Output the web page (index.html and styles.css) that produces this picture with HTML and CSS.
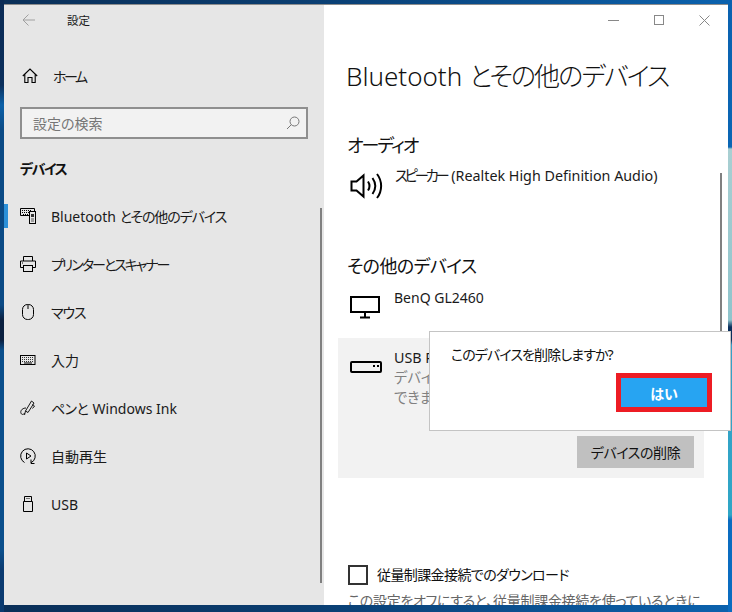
FILE: index.html
```html
<!DOCTYPE html>
<html lang="ja">
<head>
<meta charset="utf-8">
<title>設定</title>
<link rel="stylesheet" href="styles.css">
</head>
<body>
<div class="window">
  <aside class="sidebar">
    <div class="titlebar">
      <svg class="back" width="13" height="12" viewBox="0 0 13 12"><path d="M6.500.5 1 6l5.500 5.500M1 6h12" fill="none" stroke="#a0a0a0"/></svg>
      <span class="apptitle">設定</span>
    </div>
    <div class="home">
      <svg width="16" height="16" viewBox="0 0 16 16"><path d="M.8 8 8 1l7.200 7M2.800 6.500V14.500H6V9.500h4V14.500h3.200V6.500" fill="none" stroke="#000" stroke-width="1.100"/></svg>
      <span class="ls-home">ホーム</span>
    </div>
    <div class="search">
      <span>設定の検索</span>
      <svg width="14" height="14" viewBox="0 0 14 14"><circle cx="8.500" cy="5.500" r="4.500" fill="none" stroke="#777"/><path d="M5.300 8.700 1 13" stroke="#777" fill="none"/></svg>
    </div>
    <h2 class="navhead">デバイス</h2>
    <nav class="nav">
      <div class="navitem active">
        <svg width="16" height="16" viewBox="0 0 16 16"><path d="M.5.500h14V3M.5.500V7.500H9" fill="none" stroke="#000"/><path d="M2 2.500h10M2 4.500h10M3 6.500h6" stroke="#000" stroke-dasharray="1 1"/><rect x="9.500" y="3.500" width="6" height="12" fill="#e6e6e6" stroke="#000"/><rect x="11" y="6" width="3" height="3" fill="#333"/><path d="M11 11h3M11 13h3" stroke="#555"/></svg>
        <span>Bluetooth <span class="ls-1">とその他のデバイス</span></span>
      </div>
      <div class="navitem">
        <svg width="16" height="16" viewBox="0 0 16 16"><path d="M3.500 5V.5h9V5M3.500 11.500H.5V5h15v6.500h-3" fill="none" stroke="#000"/><rect x="3.500" y="9.500" width="9" height="6" fill="none" stroke="#000"/><path d="M2 7h1" stroke="#000"/></svg>
        <span class="ls-2">プリンターとスキャナー</span>
      </div>
      <div class="navitem">
        <svg width="16" height="16" viewBox="0 0 16 16"><rect x="2.500" y=".5" width="11" height="15" rx="5" fill="none" stroke="#000"/><path d="M8 .5V5" stroke="#000"/></svg>
        <span class="ls-1">マウス</span>
      </div>
      <div class="navitem">
        <svg width="16" height="16" viewBox="0 0 16 16"><rect x=".5" y="3.500" width="14.500" height="9" fill="none" stroke="#000"/><path d="M2 5.500h12M2 7.500h12M2 9.500h12" stroke="#333" stroke-dasharray="1 1"/><path d="M4 11h8" stroke="#000"/></svg>
        <span>入力</span>
      </div>
      <div class="navitem">
        <svg width="16" height="16" viewBox="0 0 16 16"><path d="M11.500 1 14 3 8 12.500 5.500 11ZM12.500 4.500l2 1.500-2 2.500M4.500 15 5.500 11" fill="none" stroke="#000" stroke-width=".9"/><path d="M6 8C3 8 .5 10 .8 12.500S4 15 4.500 13" fill="none" stroke="#000" stroke-width=".9"/></svg>
        <span><span class="ls-pen">ペンと</span> Windows Ink</span>
      </div>
      <div class="navitem">
        <svg width="16" height="16" viewBox="0 0 16 16"><path d="M4.500 14.500A7.300 7.300 0 1 1 11 14.700" fill="none" stroke="#000"/><path d="M6.500 5 11 8l-4.500 3Z" fill="none" stroke="#000"/><path d="M11 11.500v4h3.500" fill="none" stroke="#000"/></svg>
        <span>自動再生</span>
      </div>
      <div class="navitem">
        <svg width="16" height="16" viewBox="0 0 16 16"><path d="M4.500 5.500V.5h7v5M3.500 5.500h9v10h-9Z" fill="none" stroke="#000"/><path d="M6.500 2.500h1M8.500 2.500h1" stroke="#000"/></svg>
        <span>USB</span>
      </div>
    </nav>
    <div class="scroll scroll-side"></div>
  </aside>
  <main class="main">
    <div class="controls">
      <svg width="11" height="1" viewBox="0 0 11 1"><path d="M0 .5h11" stroke="#888"/></svg>
      <svg width="10" height="10" viewBox="0 0 10 10"><rect x=".5" y=".5" width="9" height="9" fill="none" stroke="#888"/></svg>
      <svg width="11" height="11" viewBox="0 0 11 11"><path d="M.5.500l10 10M10.500.5l-10 10" stroke="#888"/></svg>
    </div>
    <h1 class="pagetitle">Bluetooth <span class="ls-title">とその他のデバイス</span></h1>
    <h3 class="section first">オーディオ</h3>
    <div class="device spk">
      <svg width="34" height="28" viewBox="0 0 34 28"><path d="M1.500 9.500h5l7-6v21l-7-6h-5Z" fill="none" stroke="#000" stroke-width="2"/><path d="M18 9.500c2 3 2 6 0 9M22.500 6c3.500 5 3.500 11 0 16M27 2c5.500 7 5.500 17 0 24" fill="none" stroke="#000" stroke-width="2"/></svg>
      <span class="spk-text"><span class="ls-spk">スピーカー</span> <span>(Realtek High Definition Audio)</span></span>
    </div>
    <h3 class="section second">その他のデバイス</h3>
    <div class="device mon">
      <svg width="30" height="23" viewBox="0 0 30 23"><rect x="1" y="1" width="28" height="15" fill="none" stroke="#000" stroke-width="2"/><path d="M15 17v4M10 21.500h10" stroke="#000" stroke-width="2"/></svg>
      <span>BenQ GL2460</span>
    </div>
    <section class="panel">
      <div class="panelrow">
        <svg width="32" height="12" viewBox="0 0 32 12"><rect x="1" y="1" width="30" height="10" rx="1" fill="none" stroke="#000" stroke-width="2"/><path d="M23 5h2M27 5h2" stroke="#000" stroke-width="2"/></svg>
        <div class="paneltext">
          <div>USB Receiver</div>
          <div class="muted">デバイスを削除すると<br>できます</div>
        </div>
      </div>
      <button class="remove">デバイスの削除</button>
    </section>
    <label class="check"><span class="box"></span>従量制課金接続でのダウンロード</label>
    <p class="note">この設定をオフにすると、従量制課金接続を使っているときに</p>
    <div class="scroll scroll-main"></div>
  </main>
</div>
<div class="dialog">
  <p>このデバイスを削除しますか?</p>
  <button class="yes">はい</button>
</div>
</body>
</html>
```

FILE: styles.css
```css
* { box-sizing: border-box; }
html, body { margin: 0; height: 100%; }
body {
  width: 732px; height: 612px; overflow: hidden; position: relative;
  padding: 4px 4px 7px 4px;
  font-family: "Noto Sans", "Noto Sans CJK JP", sans-serif;
  font-feature-settings: "palt";
  color: #1a1a1a;
  background:
    linear-gradient(180deg, #0a62b0 0, #0a66b4 147px, #a9cfd2 149px, #8fc4cc 320px, #0a2f5c 327px, #0a2f5c 340px, #35a0c8 345px, #2fa6c6 515px, #0a6cc0 520px, #0a6cc0 100%) right top / 4px 100% no-repeat,
    linear-gradient(180deg, #0a2b55 0, #0a2f5c 85px, #0a60a8 105px, #0a4a85 130px, #0a4a85 305px, #0a2040 320px, #0a2040 340px, #0a4f8c 350px, #0a4f8c 550px, #0a3a70 570px, #0a3a70 100%) left top / 4px 100% no-repeat,
    linear-gradient(90deg, #0a2f58 0, #0a3d70 300px, #0b62ae 732px);
}
button { font-feature-settings: "palt"; }
.window { display: flex; height: 601px; border-top: 1px solid #8c8c8c; overflow: hidden; }
.sidebar { width: 320px; background: #e6e6e6; position: relative; flex: none; }
.main { flex: 1; background: #fff; position: relative; overflow: hidden; }
.titlebar { display: flex; align-items: center; height: 30px; padding-left: 18px; }
.apptitle { font-size: 11.500px; margin-left: 32px; }
.back { flex: none; }
.home { display: flex; align-items: center; height: 30px; margin-top: 26px; padding-left: 18px; gap: 15px; font-size: 14px; }
.ls-home { letter-spacing: -2.500px; }
.search { margin: 16px 16px 0 16px; height: 32px; border: 2px solid #8f8f8f; background: #f2f2f2; display: flex; align-items: center; justify-content: space-between; padding: 0 6px 0 11px; font-size: 14px; color: #767676; }
.navhead { margin: 20px 0 0 16px; font-size: 14px; line-height: 20px; font-weight: 700; color: #111; letter-spacing: -1.500px; }
.nav { margin-top: 13px; }
.navitem { height: 48px; display: flex; align-items: center; gap: 15px; padding-left: 16px; font-size: 14px; position: relative; }
.navitem.active::before { content: ""; position: absolute; left: 0; top: 12px; width: 4px; height: 24px; background: #2b90d9; }
.ls-1 { letter-spacing: -1.100px; }
.ls-2 { letter-spacing: -2px; }
.ls-pen { letter-spacing: -.7px; margin-right: 1px; }
.ls-title { letter-spacing: -1.850px; }
.ls-spk { letter-spacing: -3.200px; margin-right: 1px; }
.scroll { position: absolute; width: 2px; background: #808080; }
.scroll-side { left: 316px; top: 203px; height: 375px; }
.scroll-main { left: 396px; top: 168px; height: 158px; }
.controls { display: flex; justify-content: flex-end; align-items: center; gap: 35px; height: 30px; padding-right: 18px; }
.pagetitle { margin: 21px 0 0 22px; font-size: 26px; line-height: 40px; font-weight: 300; color: #111; }
.section { margin: 0 0 0 23px; font-size: 18px; line-height: 26px; font-weight: 400; color: #111; }
.section.first { margin-top: 36px; letter-spacing: -2px; }
.section.second { margin-top: 53px; letter-spacing: -.6px; }
.device { display: flex; gap: 11px; padding-left: 26px; font-size: 14.300px; line-height: 20px; }
.device svg { flex: none; }
.spk { margin-top: 4px; }
.spk svg { margin-top: 10px; }
.spk-text { margin-top: 4px; }
.mon { margin-top: 5px; font-size: 14px; }
.mon svg { margin-top: 12px; }
.mon span { margin: 4px 0 0 3px; }
.panel { margin: 19px 0 0 14px; width: 366px; height: 140px; background: #f2f2f2; position: relative; padding: 10px 10px 0 12px; }
.panelrow { display: flex; gap: 12px; font-size: 14.300px; line-height: 20px; }
.panelrow svg { margin-top: 13px; flex: none; }
.muted { color: #808080; }
.remove { position: absolute; right: 10px; bottom: 10px; width: 117px; height: 32px; border: 0; background: #c0c0c0; font: inherit; font-size: 14px; color: #111; padding: 0; letter-spacing: -.4px; }
.check { display: flex; align-items: center; gap: 9px; margin: 87px 0 0 24px; font-size: 14px; line-height: 20px; color: #111; letter-spacing: -.6px; }
.box { width: 20px; height: 20px; border: 2px solid #333; flex: none; }
.note { margin: 6px 0 0 24px; font-size: 14px; line-height: 20px; color: #666; white-space: nowrap; letter-spacing: -.3px; }
.dialog { position: absolute; left: 429px; top: 331px; width: 302px; height: 100px; background: #fff; border: 1px solid #c4c4c4; }
.dialog p { margin: 0; position: absolute; left: 21px; top: 13px; font-size: 14px; line-height: 20px; color: #111; letter-spacing: -.9px; }
.yes { position: absolute; left: 186px; top: 41px; width: 96px; height: 39px; border: 5px solid #ed1c24; background: #27a4f2; color: #fff; font: inherit; font-size: 14px; font-weight: 700; padding: 0; }
```
